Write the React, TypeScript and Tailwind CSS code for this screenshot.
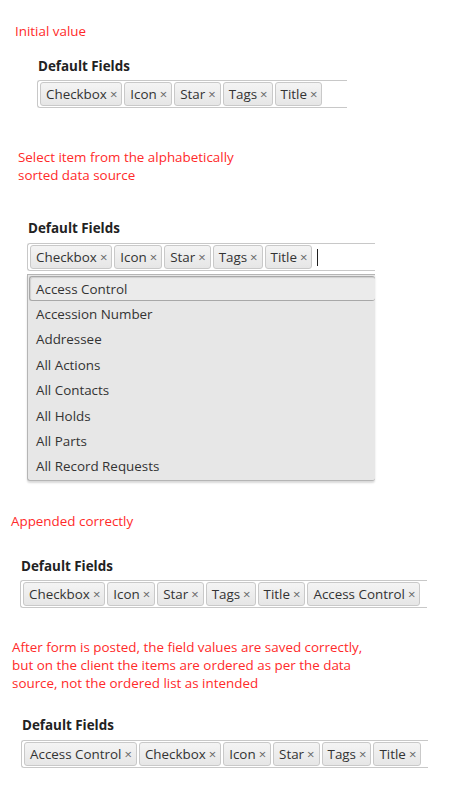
import React from 'react';

const font = { fontFamily: '"Open Sans", "Noto Sans", sans-serif' };

const Tag = ({ label }: { label: string }) => (
  <span className="flex h-[24px] items-center rounded-[3px] border border-[#c9c9c9] bg-gradient-to-b from-[#f4f4f4] to-[#e6e6e6] pl-[5px] pr-[4px] text-[13.4px] text-[#333]">
    {label}
    <span className="ml-[3px] text-[13px] leading-none text-[#666]">×</span>
  </span>
);

const TagBox = ({
  tags,
  width,
  caret = false,
}: {
  tags: string[];
  width: string;
  caret?: boolean;
}) => (
  <div
    className={`flex h-[28px] items-center gap-[2px] rounded-l-[3px] border border-r-0 border-[#c8c8c8] bg-white pl-[2px] ${width}`}
  >
    {tags.map((t) => (
      <Tag key={t} label={t} />
    ))}
    {caret && <span className="ml-[3px] h-[17px] w-px bg-[#222]" />}
  </div>
);

const Label = ({ className }: { className: string }) => (
  <div className={`text-[13.4px] font-bold leading-[18px] text-[#222] ${className}`}>Default Fields</div>
);

const Note = ({ children, className }: { children: React.ReactNode; className: string }) => (
  <p className={`text-[13.4px] leading-[18px] text-[#ff2a2a] ${className}`}>{children}</p>
);

const options = [
  'Access Control',
  'Accession Number',
  'Addressee',
  'All Actions',
  'All Contacts',
  'All Holds',
  'All Parts',
  'All Record Requests',
];

export default function App() {
  const base = ['Checkbox', 'Icon', 'Star', 'Tags', 'Title'];

  return (
    <div className="min-h-screen w-[472px] bg-white" style={font}>
      <div className="pt-[22px]">
        <Note className="ml-[15px]">Initial value</Note>
        <Label className="ml-[38px] mt-[17px]" />
        <div className="ml-[37px] mt-[5px]">
          <TagBox tags={base} width="w-[310px]" />
        </div>
      </div>

      <div className="pt-[40px]">
        <Note className="ml-[18px] w-[240px]">Select item from the alphabetically sorted data source</Note>
        <Label className="ml-[28px] mt-[35px]" />
        <div className="ml-[27px] mt-[6px] w-[348px]">
          <TagBox tags={base} width="w-[348px]" caret />
          <ul className="mt-[3px] rounded-b-[3px] border border-r-0 border-[#b5b5b5] bg-[#e7e7e7] pb-[1px] pl-[1px] pt-[1px] shadow-[0_2px_2px_rgba(0,0,0,0.15)]">
            {options.map((o, i) => (
              <li
                key={o}
                className={`flex h-[25.4px] items-center text-[13.4px] text-[#333] ${
                  i === 0
                    ? 'rounded-[3px] border border-r-0 border-[#a8a8a8] bg-[#ebebeb] pl-[6px] shadow-[inset_1px_1px_1px_rgba(0,0,0,0.12)]'
                    : 'pl-[7px]'
                }`}
              >
                {o}
              </li>
            ))}
          </ul>
        </div>
      </div>

      <div className="pt-[31px]">
        <Note className="ml-[11px]">Appended correctly</Note>
        <Label className="ml-[21px] mt-[27px]" />
        <div className="ml-[20px] mt-[5px]">
          <TagBox tags={[...base, 'Access Control']} width="w-[407px]" />
        </div>
      </div>

      <div className="pt-[30px]">
        <Note className="ml-[12px] w-[370px]">
          After form is posted, the field values are saved correctly, but on the client the items are ordered as per the data source, not the ordered list as intended
        </Note>
        <Label className="ml-[22px] mt-[24px]" />
        <div className="ml-[21px] mt-[6px]">
          <TagBox tags={['Access Control', ...base]} width="w-[407px]" />
        </div>
      </div>
    </div>
  );
}
